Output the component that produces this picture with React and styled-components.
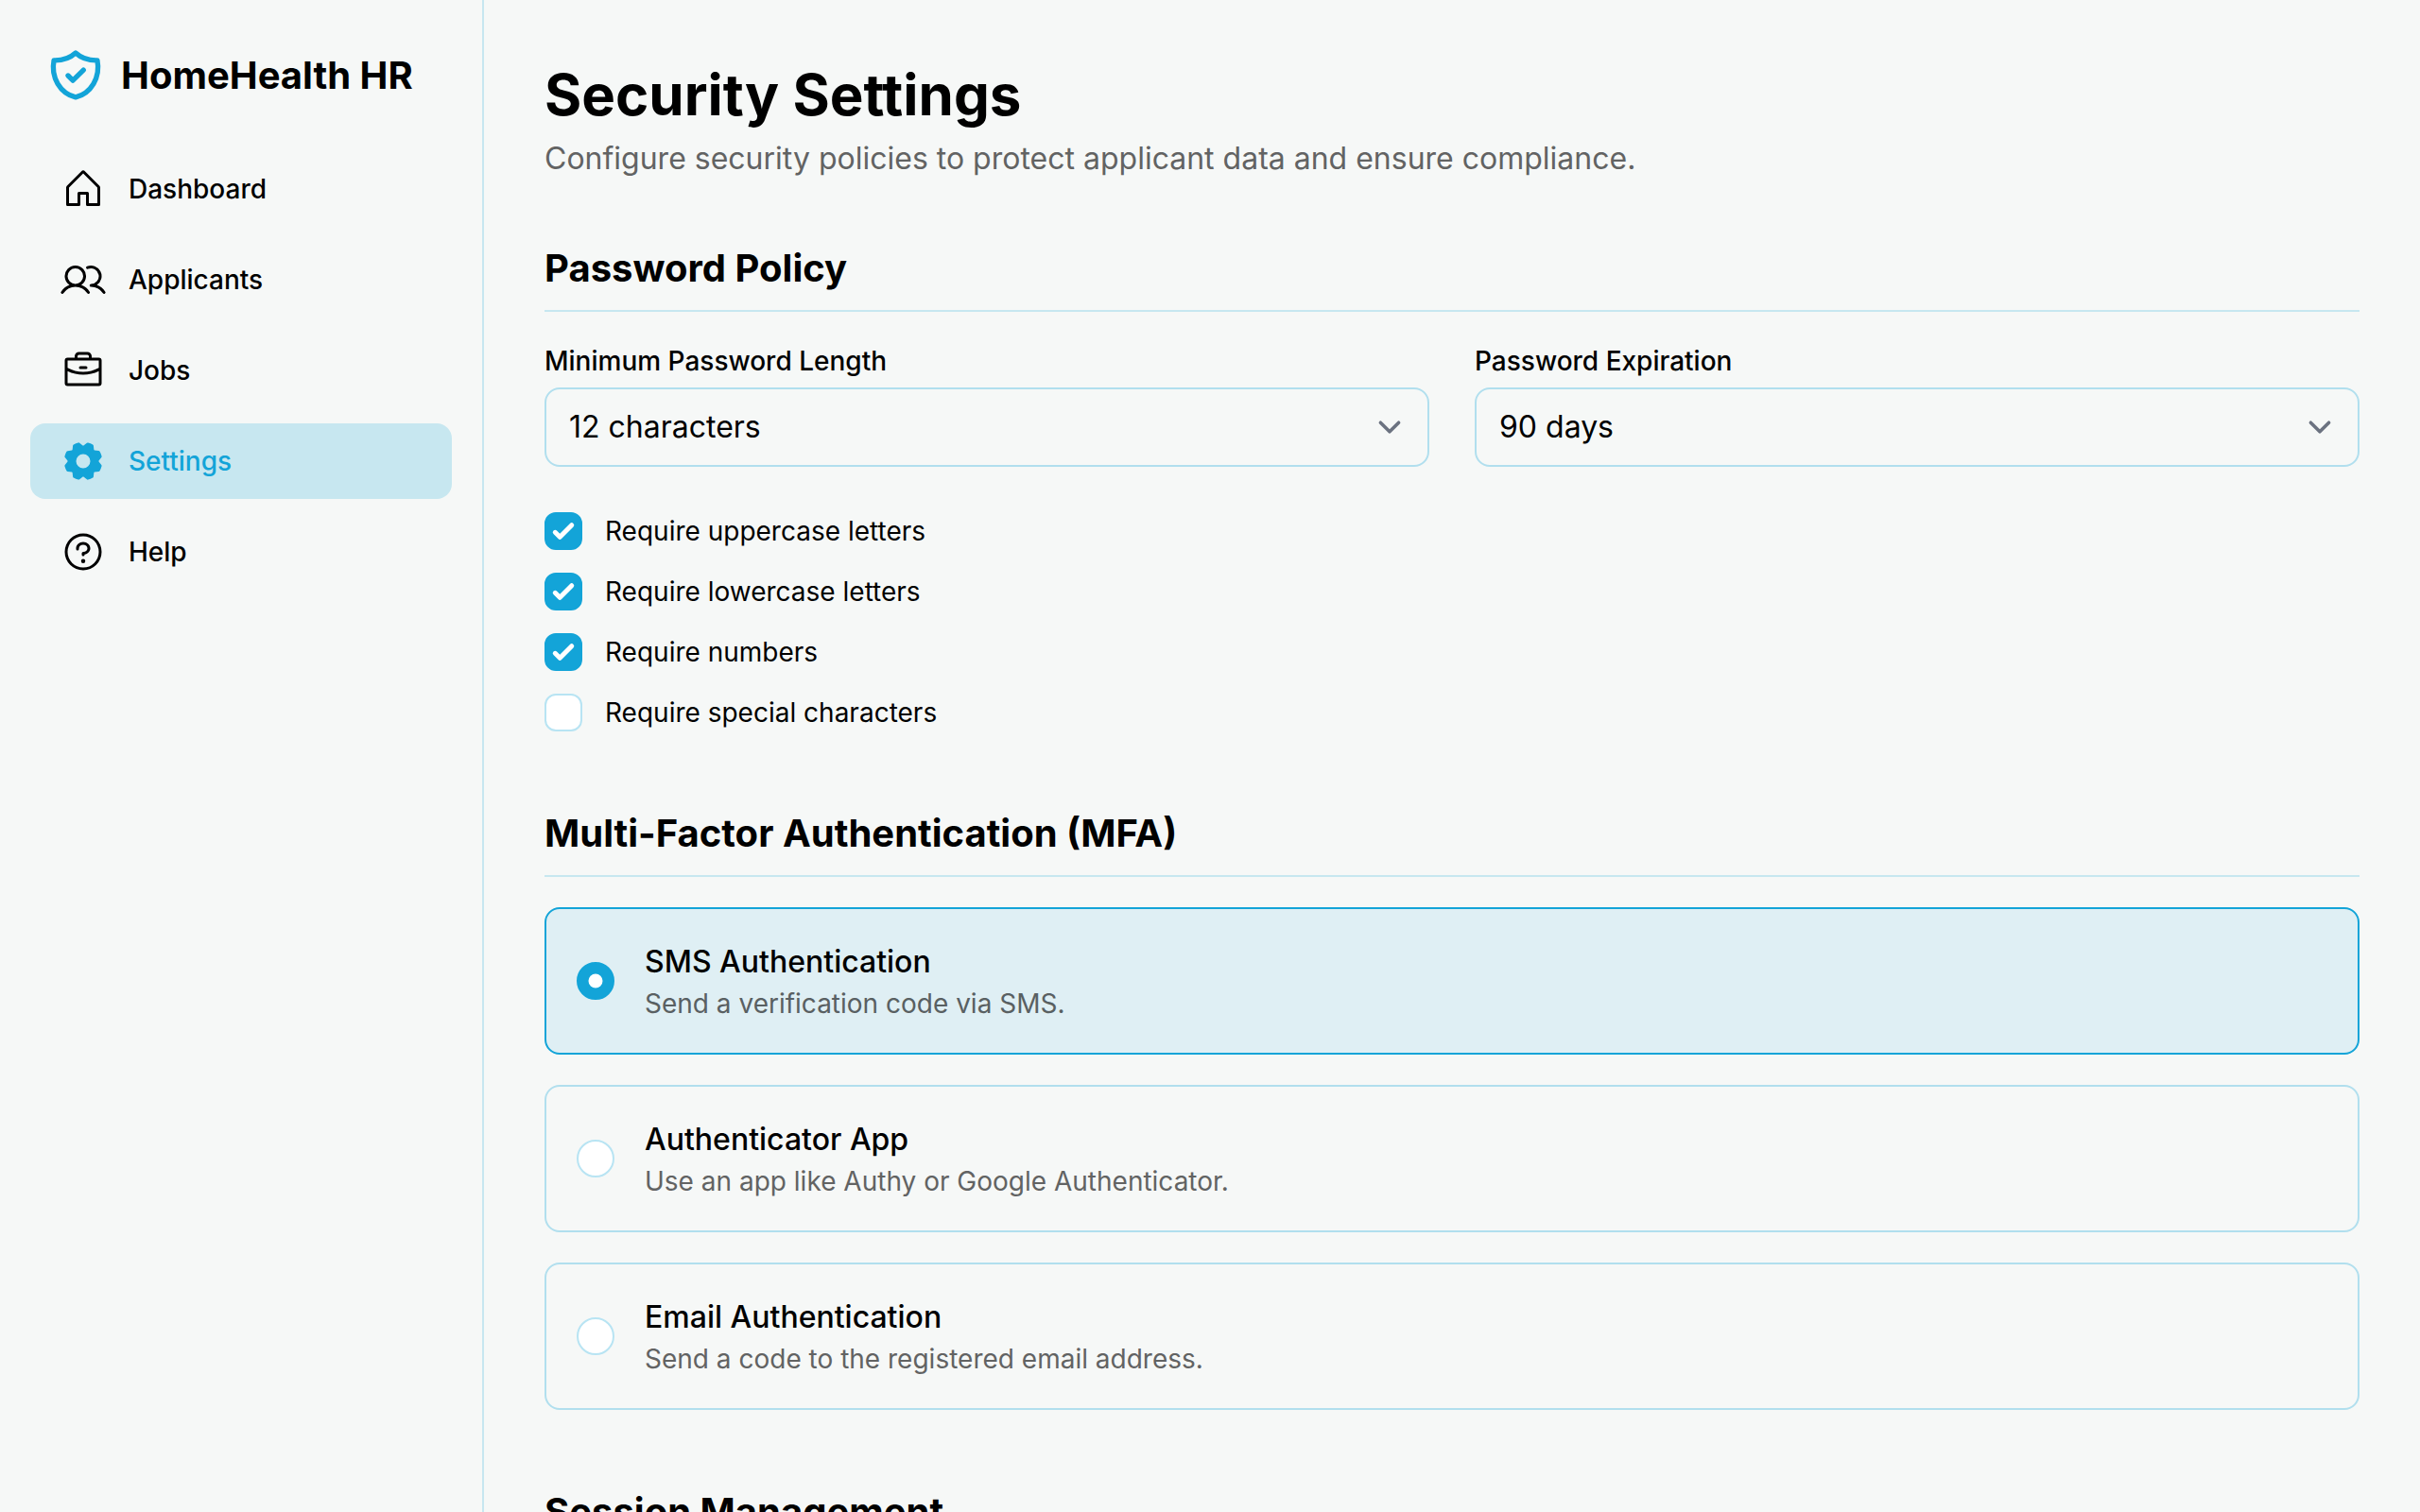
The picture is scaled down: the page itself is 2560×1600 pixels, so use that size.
import React, { useState } from "react";
import styled, { createGlobalStyle } from "styled-components";
import { PiHouse, PiUsers, PiBriefcase, PiGearFill, PiQuestion } from "react-icons/pi";

const color = {
  accent: "#13a4d8",
  page: "#f6f8f7",
  tint20: "#c7e7f0",
  tint10: "#dfeff4",
  line: "#b1dfee",
  controlLine: "#b8e4f3",
  ink: "#000000",
  muted: "#626363",
  chevron: "#6b7280",
};

const GlobalStyle = createGlobalStyle`
  *, *::before, *::after { box-sizing: border-box; }
  body {
    margin: 0;
    background: ${color.page};
    color: ${color.ink};
    font-family: Inter, "Liberation Sans", sans-serif;
    font-size: 32px;
    line-height: 48px;
  }
  h1, h2, p { margin: 0; }
`;

const Layout = styled.div`
  display: flex;
  height: 100vh;
  overflow: hidden;
`;

const Sidebar = styled.aside`
  flex: 0 0 512px;
  display: flex;
  flex-direction: column;
  gap: 48px;
  padding: 48px 32px;
  border-right: 2px solid ${color.tint20};
`;

const Brand = styled.div`
  display: flex;
  align-items: center;
  gap: 16px;
  padding: 0 16px;
  font-size: 40px;
  line-height: 56px;
  font-weight: 700;
`;

const BrandMark = styled.svg`
  width: 64px;
  height: 64px;
  fill: none;
  stroke: ${color.accent};
  stroke-width: 2;
  stroke-linecap: round;
  stroke-linejoin: round;
`;

const Nav = styled.nav`
  display: flex;
  flex-direction: column;
  gap: 16px;
`;

const NavLink = styled.a`
  display: flex;
  align-items: center;
  gap: 24px;
  padding: 16px 32px;
  border-radius: 16px;
  font-size: 28px;
  line-height: 48px;
  font-weight: 500;
  text-decoration: none;
  color: ${(p) => (p.$active ? color.accent : color.ink)};
  background: ${(p) => (p.$active ? color.tint20 : "transparent")};

  svg {
    width: 48px;
    height: 48px;
  }
`;

const Main = styled.main`
  flex: 1;
  min-width: 0;
  overflow: hidden;
  display: flex;
  flex-direction: column;
  padding: 64px;
`;

const PageHeader = styled.header`
  display: flex;
  flex-direction: column;
  gap: 8px;
  margin-bottom: 64px;
`;

const PageTitle = styled.h1`
  font-size: 60px;
  line-height: 72px;
  font-weight: 700;
`;

const Subtitle = styled.p`
  color: ${color.muted};
`;

const Sections = styled.div`
  display: flex;
  flex-direction: column;
  gap: 80px;
`;

const SectionTitle = styled.h2`
  margin-bottom: 32px;
  padding-bottom: 16px;
  border-bottom: 2px solid ${color.tint20};
  font-size: 40px;
  line-height: 56px;
  font-weight: 700;
`;

const FieldGrid = styled.div`
  display: grid;
  grid-template-columns: 1fr 1fr;
  gap: 48px;
  margin-bottom: 48px;
`;

const Field = styled.div`
  display: flex;
  flex-direction: column;
  gap: 8px;
`;

const FieldLabel = styled.label`
  font-size: 28px;
  line-height: 40px;
  font-weight: 500;
`;

const SelectWrap = styled.div`
  position: relative;
  display: grid;
`;

const Select = styled.select`
  appearance: none;
  width: 100%;
  padding: 16px 80px 16px 24px;
  border: 2px solid ${color.line};
  border-radius: 16px;
  background: ${color.page};
  color: ${color.ink};
  font: inherit;
`;

const Chevron = styled.svg`
  position: absolute;
  right: 18px;
  top: 18px;
  width: 48px;
  height: 48px;
  fill: none;
  stroke: ${color.chevron};
  stroke-width: 1.5;
  stroke-linecap: round;
  stroke-linejoin: round;
  pointer-events: none;
`;

const CheckList = styled.div`
  display: flex;
  flex-direction: column;
  align-items: flex-start;
  gap: 24px;
`;

const CheckRow = styled.label`
  display: flex;
  align-items: center;
  gap: 24px;
  font-size: 28px;
  line-height: 40px;
`;

const ControlBox = styled.span`
  display: grid;
  flex: none;

  > * {
    grid-area: 1 / 1;
  }
`;

const Control = styled.input`
  appearance: none;
  width: 40px;
  height: 40px;
  margin: 0;
  border: 2px solid ${color.controlLine};
  border-radius: ${(p) => (p.type === "radio" ? "50%" : "12px")};
  background: #ffffff;

  &:checked {
    border-color: ${color.accent};
    background: ${color.accent};
  }

  & + svg {
    width: 40px;
    height: 40px;
    fill: #ffffff;
    pointer-events: none;
  }
`;

const OptionList = styled.div`
  display: flex;
  flex-direction: column;
  gap: 32px;
`;

const OptionCard = styled.label`
  display: flex;
  align-items: center;
  gap: 32px;
  padding: 32px;
  border: 2px solid ${(p) => (p.$selected ? color.accent : color.line)};
  border-radius: 16px;
  background: ${(p) => (p.$selected ? color.tint10 : "transparent")};
`;

const OptionText = styled.span`
  display: flex;
  flex-direction: column;
`;

const OptionName = styled.span`
  font-weight: 500;
`;

const OptionHint = styled.span`
  font-size: 28px;
  line-height: 40px;
  color: ${(p) => (p.$selected ? "#596062" : color.muted)};
`;

const navItems = [
  { label: "Dashboard", Icon: PiHouse },
  { label: "Applicants", Icon: PiUsers },
  { label: "Jobs", Icon: PiBriefcase },
  { label: "Settings", Icon: PiGearFill, active: true },
  { label: "Help", Icon: PiQuestion },
];

const ruleItems = [
  { id: "uppercase", label: "Require uppercase letters", on: true },
  { id: "lowercase", label: "Require lowercase letters", on: true },
  { id: "numbers", label: "Require numbers", on: true },
  { id: "special", label: "Require special characters", on: false },
];

const mfaItems = [
  { id: "sms", name: "SMS Authentication", hint: "Send a verification code via SMS." },
  { id: "app", name: "Authenticator App", hint: "Use an app like Authy or Google Authenticator." },
  { id: "email", name: "Email Authentication", hint: "Send a code to the registered email address." },
];

function SelectField({ id, label, options, initial }) {
  return (
    <Field>
      <FieldLabel htmlFor={id}>{label}</FieldLabel>
      <SelectWrap>
        <Select id={id} defaultValue={initial}>
          {options.map((o) => (
            <option key={o}>{o}</option>
          ))}
        </Select>
        <Chevron viewBox="0 0 20 20" aria-hidden="true">
          <path d="M6 8l4 4 4-4" />
        </Chevron>
      </SelectWrap>
    </Field>
  );
}

function Rule({ label, on }) {
  const [checked, setChecked] = useState(on);
  return (
    <CheckRow>
      <ControlBox>
        <Control type="checkbox" checked={checked} onChange={(e) => setChecked(e.target.checked)} />
        {checked && (
          <svg viewBox="0 0 16 16" aria-hidden="true">
            <path d="M12.207 4.793a1 1 0 010 1.414l-5 5a1 1 0 01-1.414 0l-2-2a1 1 0 011.414-1.414L6.5 9.086l4.293-4.293a1 1 0 011.414 0z" />
          </svg>
        )}
      </ControlBox>
      <span>{label}</span>
    </CheckRow>
  );
}

export default function App() {
  const [method, setMethod] = useState("sms");
  return (
    <>
      <GlobalStyle />
      <Layout>
        <Sidebar>
          <Brand>
            <BrandMark viewBox="0 0 24 24" aria-hidden="true">
              <path d="M12 3C9.800 5 6.800 6.050 3.400 5.950C2.100 12.700 5.800 19 12 20.600C18.200 19 21.900 12.700 20.600 5.950C17.200 6.050 14.200 5 12 3z" />
              <path d="M9 12l1.900 1.900 4.200-4.100" />
            </BrandMark>
            <span>HomeHealth HR</span>
          </Brand>
          <Nav>
            {navItems.map(({ label, Icon, active }) => (
              <NavLink key={label} href="#" $active={active} aria-current={active ? "page" : undefined}>
                <Icon aria-hidden="true" />
                {label}
              </NavLink>
            ))}
          </Nav>
        </Sidebar>
        <Main>
          <PageHeader>
            <PageTitle>Security Settings</PageTitle>
            <Subtitle>Configure security policies to protect applicant data and ensure compliance.</Subtitle>
          </PageHeader>
          <Sections>
            <section>
              <SectionTitle>Password Policy</SectionTitle>
              <FieldGrid>
                <SelectField
                  id="min-length"
                  label="Minimum Password Length"
                  options={["12 characters"]}
                  initial="12 characters"
                />
                <SelectField
                  id="expiration"
                  label="Password Expiration"
                  options={["90 days"]}
                  initial="90 days"
                />
              </FieldGrid>
              <CheckList>
                {ruleItems.map((r) => (
                  <Rule key={r.id} label={r.label} on={r.on} />
                ))}
              </CheckList>
            </section>
            <section>
              <SectionTitle>Multi-Factor Authentication (MFA)</SectionTitle>
              <OptionList>
                {mfaItems.map((m) => (
                  <OptionCard key={m.id} $selected={method === m.id}>
                    <ControlBox>
                      <Control
                        type="radio"
                        name="mfa"
                        checked={method === m.id}
                        onChange={() => setMethod(m.id)}
                      />
                      {method === m.id && (
                        <svg viewBox="0 0 16 16" aria-hidden="true">
                          <circle cx="8" cy="8" r="3" />
                        </svg>
                      )}
                    </ControlBox>
                    <OptionText>
                      <OptionName>{m.name}</OptionName>
                      <OptionHint $selected={method === m.id}>{m.hint}</OptionHint>
                    </OptionText>
                  </OptionCard>
                ))}
              </OptionList>
            </section>
            <section>
              <SectionTitle>Session Management</SectionTitle>
            </section>
          </Sections>
        </Main>
      </Layout>
    </>
  );
}
